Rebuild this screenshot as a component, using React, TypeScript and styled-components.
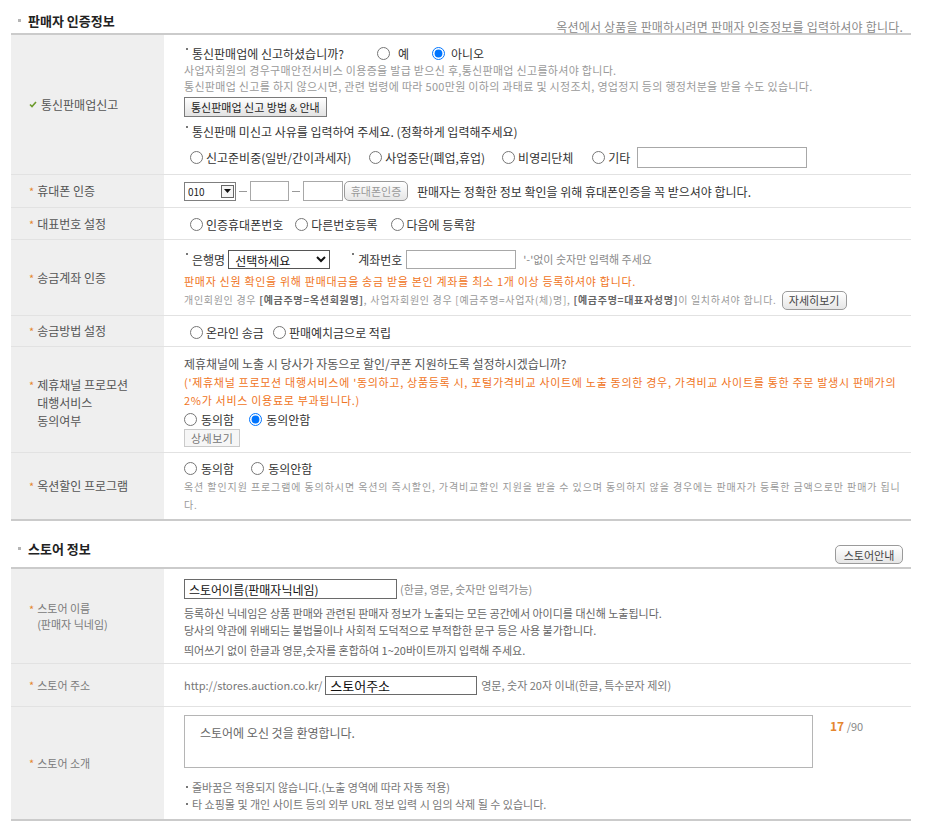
import React from 'react'
import styled, { createGlobalStyle } from 'styled-components'

const GlobalStyle = createGlobalStyle`
  html, body { margin: 0; padding: 0; background: #fff; }
  body {
    font-family: "Noto Sans CJK KR", "Noto Sans", sans-serif;
    font-size: 12px;
    color: #333;
  }
  input, select, textarea, button { font-family: inherit; }
  p { margin: 0; }
`

export default function App() {
  return (
    <Page>
      <GlobalStyle />

      <Header $h={35} $pt={7}>
        <Title><TitleDot />판매자 인증정보</Title>
        <HeaderNote>옥션에서 상품을 판매하시려면 판매자 인증정보를 입력하셔야 합니다.</HeaderNote>
      </Header>

      <Row>
        <Label>
          <Check width="8" height="7" viewBox="0 0 8 7">
            <polyline points="1,3.5 3,5.5 7,1" fill="none" stroke="#6c9a2c" strokeWidth="1.6" />
          </Check>
          통신판매업신고
        </Label>
        <Content $pt={9} $pb={6}>
          <Line $h={18}>
            <Dot />통신판매업에 신고하셨습니까?
            <Radio name="report" label="예" $ml={33} $gap={8} $mr={23} />
            <Radio name="report" label="아니오" $gap={6} checked />
          </Line>
          <Hint>사업자회원의 경우구매안전서비스 이용증을 발급 받으신 후,통신판매업 신고를하셔야 합니다.</Hint>
          <Hint>통신판매업 신고를 하지 않으시면, 관련 법령에 따라 500만원 이하의 과태료 및 시정조치, 영업정지 등의 행정처분을 받을 수도 있습니다.</Hint>
          <BoxButton $mt={3}>통신판매업 신고 방법 &amp; 안내</BoxButton>
          <Line $h={18} $mt={5}>
            <Dot />통신판매 미신고 사유를 입력하여 주세요. (정확하게 입력해주세요)
          </Line>
          <Line $h={21} $mt={7}>
            <Radio name="reason" label="신고준비중(일반/간이과세자)" $ml={6} $mr={18} />
            <Radio name="reason" label="사업중단(폐업,휴업)" $mr={17} />
            <Radio name="reason" label="비영리단체" $mr={19} />
            <Radio name="reason" label="기타" $mr={7} />
            <TextInput $w={170} $h={21} />
          </Line>
        </Content>
      </Row>

      <Row>
        <Label><Star>*</Star>휴대폰 인증</Label>
        <Content $pt={6} $pb={6}>
          <Line>
            <PhoneSelect>
              <select defaultValue="010">
                <option>010</option>
                <option>011</option>
                <option>016</option>
                <option>017</option>
              </select>
              <ArrowBox>
                <svg width="7" height="4" viewBox="0 0 7 4"><polygon points="0,0 7,0 3.5,4" fill="#111" /></svg>
              </ArrowBox>
            </PhoneSelect>
            <Dash />
            <TextInput $w={39} $h={20} />
            <Dash />
            <TextInput $w={40} $h={20} />
            <PillButton $w={64} $h={20} $ml={1} $tone="light">휴대폰인증</PillButton>
            <Plain $ml={9}>판매자는 정확한 정보 확인을 위해 휴대폰인증을 꼭 받으셔야 합니다.</Plain>
          </Line>
        </Content>
      </Row>

      <Row>
        <Label><Star>*</Star>대표번호 설정</Label>
        <Content $pt={6} $pb={5}>
          <Line>
            <Radio name="rep" label="인증휴대폰번호" $ml={6} $mr={12} />
            <Radio name="rep" label="다른번호등록" $mr={13} />
            <Radio name="rep" label="다음에 등록함" />
          </Line>
        </Content>
      </Row>

      <Row>
        <Label><Star>*</Star>송금계좌 인증</Label>
        <Content $pt={9} $pb={5}>
          <Line>
            <Dot />은행명
            <BankSelect defaultValue="">
              <option value="">선택하세요</option>
              <option>국민은행</option>
              <option>신한은행</option>
              <option>우리은행</option>
            </BankSelect>
            <Dot $ml={20} />계좌번호
            <TextInput $w={110} $h={19} $ml={4} />
            <Muted $ml={7}>'-'없이 숫자만 입력해 주세요</Muted>
          </Line>
          <Alert $mt={4} $lh={16}>판매자 신원 확인을 위해 판매대금을 송금 받을 본인 계좌를 최소 1개 이상 등록하셔야 합니다.</Alert>
          <Line $mt={1}>
            <Fine $ls={0.7}>
              개인회원인 경우 <b>[예금주명=옥션회원명]</b>, 사업자회원인 경우 [예금주명=사업자(체)명], <b>[예금주명=대표자성명]</b>이 일치하셔야 합니다.
            </Fine>
            <PillButton $w={65} $h={19} $ml={5} $tone="dark">자세히보기</PillButton>
          </Line>
        </Content>
      </Row>

      <Row>
        <Label><Star>*</Star>송금방법 설정</Label>
        <Content $pt={6} $pb={4}>
          <Line>
            <Radio name="pay" label="온라인 송금" $ml={6} $mr={9} />
            <Radio name="pay" label="판매예치금으로 적립" />
          </Line>
        </Content>
      </Row>

      <Row>
        <Label $pt={6}>
          <LabelBody>
            <Star>*</Star>
            <Stack>
              <span>제휴채널 프로모션</span>
              <span>대행서비스</span>
              <span>동의여부</span>
            </Stack>
          </LabelBody>
        </Label>
        <Content $pt={8} $pb={5}>
          <Question>제휴채널에 노출 시 당사가 자동으로 할인/쿠폰 지원하도록 설정하시겠습니까?</Question>
          <Alert>('제휴채널 프로모션 대행서비스에 '동의하고, 상품등록 시, 포털가격비교 사이트에 노출 동의한 경우, 가격비교 사이트를 통한 주문 발생시 판매가의 2%가 서비스 이용료로 부과됩니다.)</Alert>
          <Line>
            <Radio name="promo" label="동의함" $gap={4} $mr={15} />
            <Radio name="promo" label="동의안함" $gap={4} checked />
          </Line>
          <PlainButton>상세보기</PlainButton>
        </Content>
      </Row>

      <Row $last>
        <Label><Star>*</Star>옥션할인 프로그램</Label>
        <Content $pt={5} $pb={5}>
          <Line>
            <Radio name="discount" label="동의함" $gap={4} $mr={17} />
            <Radio name="discount" label="동의안함" $gap={4} />
          </Line>
          <Fine as="p" $ls={0.9}>
            옥션 할인지원 프로그램에 동의하시면 옥션의 즉시할인, 가격비교할인 지원을 받을 수 있으며 동의하지 않을 경우에는 판매자가 등록한 금액으로만 판매가 됩니다.
          </Fine>
        </Content>
      </Row>

      <Header $h={48} $pt={8}>
        <Title><TitleDot />스토어 정보</Title>
        <PillButton $w={68} $h={19} $tone="dark" $self>스토어안내</PillButton>
      </Header>

      <Row>
        <Label $muted>
          <LabelBody>
            <Star>*</Star>
            <Stack $lh={16}>
              <span>스토어 이름</span>
              <span>(판매자 닉네임)</span>
            </Stack>
          </LabelBody>
        </Label>
        <Content $pt={10} $pb={4}>
          <Line>
            <TextInput $w={213} $h={20} $dark $fs={12} defaultValue="스토어이름(판매자닉네임)" />
            <Muted $ml={3}>(한글, 영문, 숫자만 입력가능)</Muted>
          </Line>
          <StoreHint $mt={6}>등록하신 닉네임은 상품 판매와 관련된 판매자 정보가 노출되는 모든 공간에서 아이디를 대신해 노출됩니다.</StoreHint>
          <StoreHint>당사의 약관에 위배되는 불법물이나 사회적 도덕적으로 부적합한 문구 등은 사용 불가합니다.</StoreHint>
          <StoreHint $mt={3}>띄어쓰기 없이 한글과 영문,숫자를 혼합하여 1~20바이트까지 입력해 주세요.</StoreHint>
        </Content>
      </Row>

      <Row>
        <Label $muted><Star>*</Star>스토어 주소</Label>
        <Content $pt={11} $pb={11}>
          <Line>
            <Muted $c="#777">http://stores.auction.co.kr/</Muted>
            <TextInput $w={152} $h={19} $ml={3} $dark $fs={13} defaultValue="스토어주소" />
            <Muted $ml={4} $c="#777">영문, 숫자 20자 이내(한글, 특수문자 제외)</Muted>
          </Line>
        </Content>
      </Row>

      <Row $last>
        <Label $muted><Star>*</Star>스토어 소개</Label>
        <Content $pt={8} $pb={7}>
          <IntroRow>
            <Intro defaultValue="스토어에 오신 것을 환영합니다." />
            <Counter><strong>17</strong> /90</Counter>
          </IntroRow>
          <Notes>
            <NoteItem><Dot />줄바꿈은 적용되지 않습니다.(노출 영역에 따라 자동 적용)</NoteItem>
            <NoteItem><Dot />타 쇼핑몰 및 개인 사이트 등의 외부 URL 정보 입력 시 임의 삭제 될 수 있습니다.</NoteItem>
          </Notes>
        </Content>
      </Row>
    </Page>
  )
}

type RadioProps = {
  name: string
  label: string
  checked?: boolean
  $ml?: number
  $mr?: number
  $gap?: number
}

function Radio({ name, label, checked, $ml = 0, $mr = 0, $gap = 3 }: RadioProps) {
  return (
    <RadioLabel $ml={$ml} $mr={$mr} $gap={$gap}>
      <input type="radio" name={name} defaultChecked={checked} />
      {label}
    </RadioLabel>
  )
}

const Page = styled.div`
  width: 900px;
  margin-left: 11px;
  padding-bottom: 14px;
`
const Header = styled.div<{ $h: number; $pt: number }>`
  box-sizing: border-box;
  height: ${p => p.$h}px;
  padding: ${p => p.$pt}px 8px 0 7px;
  display: flex;
  justify-content: space-between;
  border-bottom: 2px solid #cbcbcb;
`
const Title = styled.h2`
  margin: 0;
  display: flex;
  align-items: center;
  font-size: 13px;
  font-weight: 700;
  color: #222;
`
const TitleDot = styled.span`
  width: 3px;
  height: 3px;
  background: #b5b5b5;
  margin-right: 7px;
`
const HeaderNote = styled.p`
  align-self: flex-end;
  font-size: 12px;
  line-height: 13px;
  letter-spacing: 0.2px;
  color: #8a8a8a;
`
const Row = styled.div<{ $last?: boolean }>`
  display: grid;
  grid-template-columns: 153px 1fr;
  border-bottom: ${p => (p.$last ? '2px solid #cbcbcb' : '1px solid #e2e2e2')};
`
const Label = styled.div<{ $muted?: boolean; $pt?: number }>`
  background: #efefef;
  display: flex;
  align-items: center;
  padding: ${p => p.$pt ?? 0}px 0 0 18px;
  font-size: ${p => (p.$muted ? 11 : 12)}px;
  color: ${p => (p.$muted ? '#7a7a7a' : '#555')};
  line-height: 18px;
`
const LabelBody = styled.div`
  display: flex;
  align-items: flex-start;
`
const Stack = styled.span<{ $lh?: number }>`
  display: flex;
  flex-direction: column;
  line-height: ${p => p.$lh ?? 18}px;
`
const Star = styled.span`
  color: #e5862f;
  font-size: 11px;
  line-height: inherit;
  margin-right: 3px;
`
const Check = styled.svg`
  margin: 0 4px 0 0;
`
const Content = styled.div<{ $pt: number; $pb: number }>`
  padding: ${p => p.$pt}px 6px ${p => p.$pb}px 20px;
  min-width: 0;
`
const Line = styled.div<{ $h?: number; $mt?: number }>`
  display: flex;
  align-items: center;
  height: ${p => p.$h ?? 20}px;
  margin-top: ${p => p.$mt ?? 0}px;
  white-space: nowrap;
  color: #333;
`
const Dot = styled.span<{ $ml?: number }>`
  align-self: flex-start;
  flex: none;
  width: 2px;
  height: 2px;
  background: #777;
  margin: 4px 4px 0 ${p => 2 + (p.$ml ?? 0)}px;
`
const RadioLabel = styled.label<{ $ml: number; $mr: number; $gap: number }>`
  display: inline-flex;
  align-items: center;
  gap: ${p => p.$gap}px;
  margin: 0 ${p => p.$mr}px 0 ${p => p.$ml}px;
  color: #333;
  input {
    width: 13px;
    height: 13px;
    margin: 0;
  }
`
const Hint = styled.p`
  font-size: 11px;
  line-height: 16px;
  letter-spacing: 0.3px;
  color: #9a9a9a;
  white-space: nowrap;
`
const Alert = styled.p<{ $mt?: number; $lh?: number }>`
  margin-top: ${p => p.$mt ?? 0}px;
  font-size: 11px;
  letter-spacing: 0.7px;
  line-height: ${p => p.$lh ?? 18}px;
  color: #f07423;
`
const Fine = styled.span<{ $ls: number }>`
  font-size: 10px;
  letter-spacing: ${p => p.$ls}px;
  line-height: 18px;
  color: #9a9a9a;
  b { color: #666; }
`
const Question = styled.p`
  line-height: 18px;
  color: #555;
`
const Plain = styled.span<{ $ml?: number }>`
  margin-left: ${p => p.$ml ?? 0}px;
  color: #333;
`
const Muted = styled.span<{ $ml?: number; $c?: string }>`
  margin-left: ${p => p.$ml ?? 0}px;
  font-size: 11px;
  color: ${p => p.$c ?? '#8a8a8a'};
`
const StoreHint = styled.p<{ $mt?: number }>`
  margin-top: ${p => p.$mt ?? 0}px;
  font-size: 11px;
  line-height: 17px;
  color: #666;
  white-space: nowrap;
`
const TextInput = styled.input<{ $w: number; $h: number; $ml?: number; $dark?: boolean; $fs?: number }>`
  box-sizing: border-box;
  width: ${p => p.$w}px;
  height: ${p => p.$h}px;
  margin: 0 0 0 ${p => p.$ml ?? 0}px;
  padding: 0 4px;
  border: 1px solid ${p => (p.$dark ? '#6a6a6a' : '#a8a8a8')};
  border-radius: 0;
  font-size: ${p => p.$fs ?? 12}px;
  color: #111;
  outline: none;
`
const PhoneSelect = styled.div`
  box-sizing: border-box;
  display: inline-flex;
  align-items: center;
  width: 52px;
  height: 19px;
  padding: 0 1px 0 3px;
  border: 1px solid #7f7f7f;
  font-size: 10px;
  select {
    appearance: none;
    flex: 1;
    min-width: 0;
    border: 0;
    padding: 0;
    background: none;
    font: inherit;
    color: #222;
    outline: none;
  }
`
const ArrowBox = styled.span`
  box-sizing: border-box;
  width: 13px;
  height: 13px;
  display: flex;
  align-items: center;
  justify-content: center;
  border: 1px solid #666;
  background: #f4f4f4;
`
const Dash = styled.span`
  width: 8px;
  height: 1px;
  background: #999;
  margin: 0 3px;
`
const BankSelect = styled.select`
  box-sizing: border-box;
  width: 102px;
  height: 19px;
  margin-left: 3px;
  padding: 0 2px;
  border: 1px solid #555;
  border-radius: 0;
  font-size: 12px;
  color: #111;
  background: #fff;
`
const BoxButton = styled.button<{ $mt?: number }>`
  display: block;
  height: 20px;
  margin-top: ${p => p.$mt ?? 0}px;
  padding: 0 6px;
  border: 1px solid #7a7a7a;
  border-radius: 0;
  background: linear-gradient(#ffffff, #e2e2e2);
  font-size: 11px;
  color: #222;
  cursor: pointer;
`
const PillButton = styled.button<{ $w: number; $h: number; $ml?: number; $tone: 'light' | 'dark'; $self?: boolean }>`
  flex: none;
  width: ${p => p.$w}px;
  height: ${p => p.$h}px;
  margin: 0 0 ${p => (p.$self ? 3 : 0)}px ${p => p.$ml ?? 0}px;
  align-self: ${p => (p.$self ? 'flex-end' : 'auto')};
  padding: 0;
  border: 1px solid #9a9a9a;
  border-radius: 5px;
  background: linear-gradient(#ffffff, #e6e6e6);
  font-size: 11px;
  color: ${p => (p.$tone === 'light' ? '#999' : '#444')};
  cursor: pointer;
`
const PlainButton = styled.button`
  display: block;
  height: 18px;
  padding: 0 6px;
  border: 1px solid #cacaca;
  border-radius: 0;
  background: #f6f6f6;
  font-size: 11px;
  letter-spacing: 0.5px;
  color: #777;
  cursor: pointer;
`
const IntroRow = styled.div`
  display: flex;
  align-items: flex-start;
`
const Intro = styled.textarea`
  box-sizing: border-box;
  width: 629px;
  height: 53px;
  margin: 0;
  padding: 9px 15px;
  border: 1px solid #b5b5b5;
  resize: none;
  font-size: 12px;
  line-height: 16px;
  color: #666;
  outline: none;
`
const Counter = styled.span`
  margin: 2px 0 0 17px;
  font-size: 11px;
  color: #888;
  strong {
    font-size: 12px;
    color: #e5862f;
  }
`
const Notes = styled.ul`
  list-style: none;
  margin: 10px 0 0;
  padding: 0;
`
const NoteItem = styled.li`
  display: flex;
  align-items: center;
  height: 17px;
  font-size: 11px;
  color: #777;
  span { align-self: center; margin-top: 0; }
`
